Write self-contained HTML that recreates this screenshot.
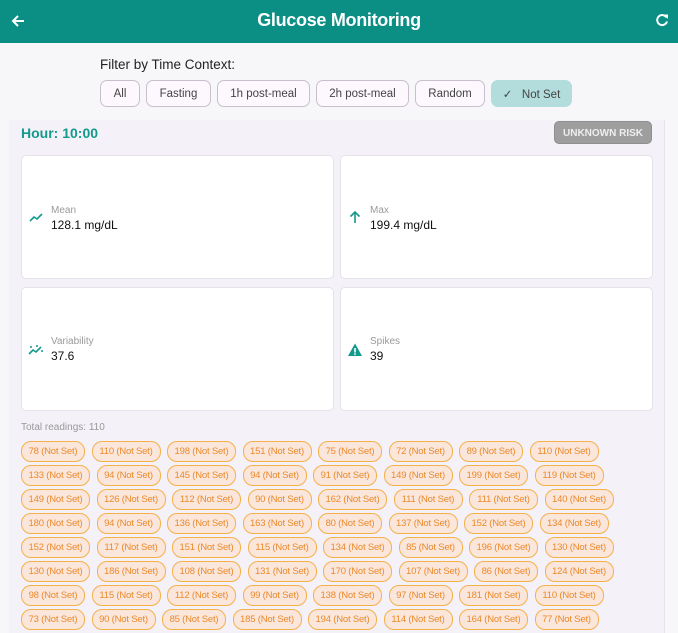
<!DOCTYPE html>
<html><head><style>
*{box-sizing:border-box;margin:0;padding:0}
html,body{width:678px;height:633px;overflow:hidden}
body{background:#f7f7f9;font-family:"Liberation Sans",sans-serif;position:relative}
.hdr{position:absolute;left:0;top:0;width:678px;height:43px;background:#0b8f85;color:#fff}
.hdr .t{position:absolute;left:0;right:0;top:10px;text-align:center;font-size:18px;font-weight:bold;letter-spacing:-0.3px}
.lbl{position:absolute;left:100px;top:57px;font-size:13.5px;color:#222}
.filters{position:absolute;left:100px;top:80px;display:flex;gap:6px}
.f{height:27px;border:1px solid #c9bfcc;border-radius:7px;background:#fdf8fd;font-size:11.5px;color:#444;display:flex;align-items:center;justify-content:center}
.f.sel{background:#b3dcdc;border-color:#b3dcdc}
.panel{position:absolute;left:9px;top:120px;width:656px;height:520px;background:#f4f1f8;border-right:1px solid #e6e3ea}
.hour{position:absolute;left:21px;top:125px;font-size:14px;color:#139a8c;font-weight:bold}
.risk{position:absolute;left:554px;top:121px;width:98px;height:23px;background:#9e9e9e;border-radius:5px;color:#eee;font-size:10px;font-weight:bold;text-align:center;line-height:23px;border:1px solid #8e8e8e}
.card{position:absolute;background:#fff;border:1px solid #e5e2e8;border-radius:5px;width:313px}
.card .ic{position:absolute;left:6px}
.card .k{position:absolute;left:29px;font-size:10px;color:#9a9a9a}
.card .v{position:absolute;left:29px;font-size:12px;color:#111}
.tot{position:absolute;left:21px;top:422px;font-size:10px;color:#999}
.row{position:absolute;left:21px;display:flex;gap:6.5px}
.c{height:21px;border:1.3px solid #f5b04a;border-radius:10px;background:#fbe6dc;color:#ea8a2a;font-size:9.5px;display:flex;align-items:center;justify-content:center;white-space:nowrap;letter-spacing:-0.2px}
.c2{width:64px}.c3{width:69px}
</style></head><body>
<div class="hdr">
<svg style="position:absolute;left:10px;top:13px" width="16" height="16" viewBox="0 0 16 16"><path d="M14 8H3M8 3L3 8l5 5" stroke="#fff" stroke-width="2" fill="none"/></svg>
<div class="t">Glucose Monitoring</div>
<svg style="position:absolute;left:654px;top:12px" width="16" height="16" viewBox="0 0 16 16"><path d="M12.5 5.5A5 5 0 1 0 13 9.5" stroke="#fff" stroke-width="2" fill="none"/><path d="M9.5 2.5h4.5v4.5z" fill="#fff"/></svg>
</div>
<div class="lbl">Filter by Time Context:</div>
<div class="filters">
<div class="f" style="width:40px">All</div>
<div class="f" style="width:65px">Fasting</div>
<div class="f" style="width:93px">1h post-meal</div>
<div class="f" style="width:93px">2h post-meal</div>
<div class="f" style="width:70px">Random</div>
<div class="f sel" style="width:81px">✓&nbsp;&nbsp;&nbsp;Not Set</div>
</div>
<div class="panel"></div>
<div class="hour">Hour: 10:00</div>
<div class="risk">UNKNOWN RISK</div>

<div class="card" style="left:21px;top:155px;height:124px">
<svg class="ic" style="top:53px" width="16" height="16" viewBox="0 0 16 16"><path d="M2 12l4-4 3 2 5-5" stroke="#139a8c" stroke-width="1.6" fill="none"/></svg>
<div class="k" style="top:49px">Mean</div><div class="v" style="top:62px">128.1 mg/dL</div></div>
<div class="card" style="left:340px;top:155px;height:124px">
<svg class="ic" style="top:53px" width="16" height="16" viewBox="0 0 16 16"><path d="M8 14V3M3.5 7.5L8 3l4.5 4.5" stroke="#139a8c" stroke-width="1.6" fill="none"/></svg>
<div class="k" style="top:49px">Max</div><div class="v" style="top:62px">199.4 mg/dL</div></div>
<div class="card" style="left:21px;top:287px;height:124px">
<svg class="ic" style="top:54px" width="16" height="16" viewBox="0 0 16 16"><path d="M1 12l4-4 3 2 5-5" stroke="#139a8c" stroke-width="1.6" fill="none"/><circle cx="3" cy="5" r="1" fill="#139a8c"/><circle cx="9" cy="4" r="1" fill="#139a8c"/><circle cx="14" cy="9" r="1" fill="#139a8c"/></svg>
<div class="k" style="top:48px">Variability</div><div class="v" style="top:61px">37.6</div></div>
<div class="card" style="left:340px;top:287px;height:124px">
<svg class="ic" style="top:54px" width="16" height="16" viewBox="0 0 16 16"><path d="M8 1.5L15 14H1z" fill="#139a8c"/><rect x="7.2" y="6" width="1.6" height="4.5" fill="#fff"/><rect x="7.2" y="11.3" width="1.6" height="1.5" fill="#fff"/></svg>
<div class="k" style="top:48px">Spikes</div><div class="v" style="top:61px">39</div></div>

<div class="tot">Total readings: 110</div>
<div id="chips"></div>
<script>
var rows=[[78,110,198,151,75,72,89,110],[133,94,145,94,91,149,199,119],[149,126,112,90,162,111,111,140],[180,94,136,163,80,137,152,134],[152,117,151,115,134,85,196,130],[130,186,108,131,170,107,86,124],[98,115,112,99,138,97,181,110],[73,90,85,185,194,114,164,77]];
var h='';rows.forEach(function(r,i){h+='<div class="row" style="top:'+(441+i*24)+'px">';r.forEach(function(n){h+='<div class="c '+(n>=100?'c3':'c2')+'">'+n+' (Not Set)</div>'});h+='</div>'});
document.getElementById('chips').innerHTML=h;
</script>
</body></html>
